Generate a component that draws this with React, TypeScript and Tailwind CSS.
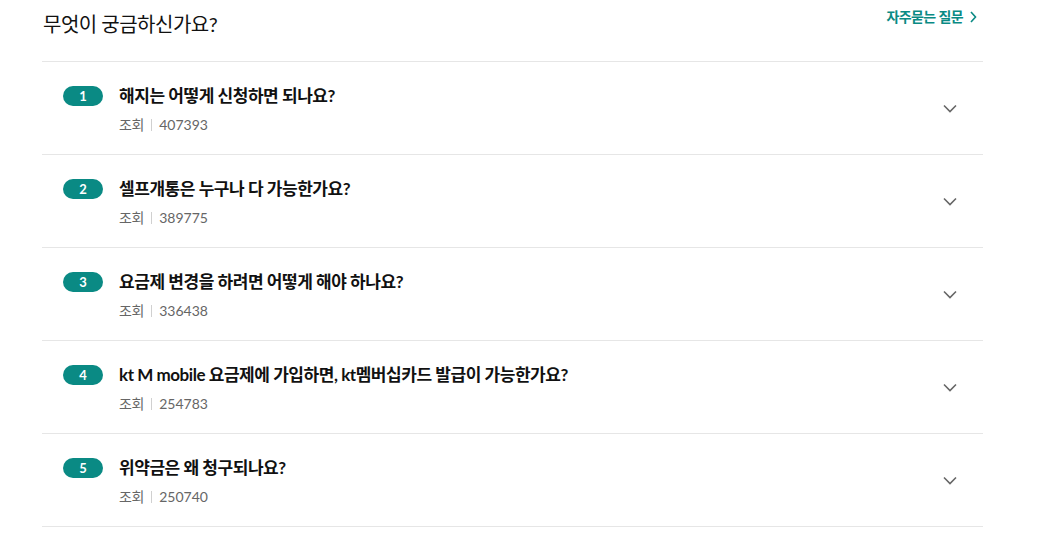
import React from "react";

const items = [
  { n: 1, q: "해지는 어떻게 신청하면 되나요?", v: "407393" },
  { n: 2, q: "셀프개통은 누구나 다 가능한가요?", v: "389775" },
  { n: 3, q: "요금제 변경을 하려면 어떻게 해야 하나요?", v: "336438" },
  { n: 4, q: "kt M mobile 요금제에 가입하면, kt멤버십카드 발급이 가능한가요?", v: "254783" },
  { n: 5, q: "위약금은 왜 청구되나요?", v: "250740" },
];

export default function App() {
  return (
    <div
      className="w-[1049px] h-[535px] bg-white overflow-hidden"
      style={{ fontFamily: "Lato, 'Noto Sans CJK KR', sans-serif" }}
    >
      <div className="ml-[42px] w-[941px]">
        <div className="flex items-start justify-between h-[62px] border-b border-[#e6e6e6]">
          <h2 className="mt-[10px] ml-[1px] text-[20px] leading-[28px] font-normal text-[#111] tracking-[-0.5px]">
            무엇이 궁금하신가요?
          </h2>
          <a className="mt-[7px] mr-[6px] flex items-center gap-[7px] text-[14px] leading-[20px] font-bold text-[#0a8a84] tracking-[-0.6px]">
            자주묻는 질문
            <svg width="7" height="12" viewBox="0 0 7 12" fill="none">
              <path d="M1 1l4.5 5L1 11" stroke="#0a8a84" strokeWidth="1.6" />
            </svg>
          </a>
        </div>
        {items.map((it) => (
          <div
            key={it.n}
            className="flex items-start h-[93px] border-b border-[#e6e6e6]"
          >
            <div className="flex-1 pl-[21px] pt-[24px]">
              <div className="flex items-center h-[20px]">
                <span className="flex items-center justify-center w-[40px] h-[20px] rounded-full bg-[#0a8a84] text-white text-[13px] font-bold leading-none">
                  {it.n}
                </span>
                <span className="ml-[16px] text-[17px] font-bold text-[#111] tracking-[-0.45px] leading-[20px]">
                  {it.q}
                </span>
              </div>
              <div className="flex items-center ml-[56px] mt-[10px] text-[14px] leading-[18px] text-[#666]">
                <span className="tracking-[-0.3px]">조회</span>
                <span className="mx-[7px] w-px h-[12px] bg-[#d0d0d0]" />
                <span>{it.v}</span>
              </div>
            </div>
            <div className="w-[40px] flex justify-start pt-[42px]">
              <svg width="14" height="9" viewBox="0 0 14 9" fill="none">
                <path d="M1 1.5l6 6 6-6" stroke="#666" strokeWidth="1.6" />
              </svg>
            </div>
          </div>
        ))}
      </div>
    </div>
  );
}
